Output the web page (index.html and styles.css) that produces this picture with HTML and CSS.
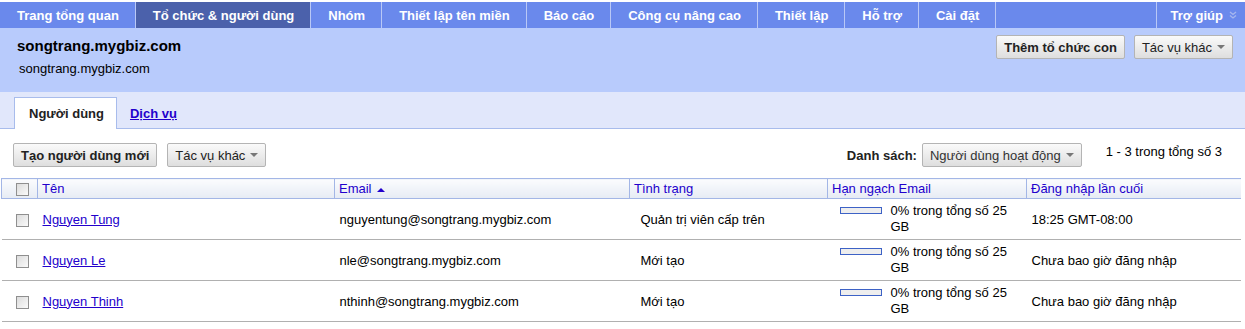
FILE: index.html
```html
<!DOCTYPE html>
<html lang="vi">
<head>
  <meta charset="UTF-8">
  <title>Tổ chức &amp; người dùng</title>
  <link rel="stylesheet" href="styles.css">
</head>
<body>
  <div class="nav">
    <a class="nav-item">Trang tổng quan</a>
    <a class="nav-item active">Tổ chức &amp; người dùng</a>
    <a class="nav-item">Nhóm</a>
    <a class="nav-item">Thiết lập tên miền</a>
    <a class="nav-item">Báo cáo</a>
    <a class="nav-item">Công cụ nâng cao</a>
    <a class="nav-item">Thiết lập</a>
    <a class="nav-item">Hỗ trợ</a>
    <a class="nav-item">Cài đặt</a>
    <span class="nav-fill"></span>
    <a class="nav-item help">Trợ giúp
      <svg class="chev" width="8" height="8" viewBox="0 0 8 8"><path d="M1 1l3 2.5L7 1M1 4.5L4 7l3-2.5" fill="none" stroke="#a7b7ee" stroke-width="1.3"/></svg>
    </a>
  </div>

  <div class="org-head">
    <div class="org-name">
      <h1>songtrang.mygbiz.com</h1>
      <div class="org-sub">songtrang.mygbiz.com</div>
    </div>
    <div class="org-actions">
      <button class="btn bold">Thêm tổ chức con</button>
      <button class="btn">Tác vụ khác <span class="caret"></span></button>
    </div>
  </div>

  <div class="tabs">
    <span class="tab selected">Người dùng</span>
    <a class="tab link" href="#">Dịch vụ</a>
  </div>

  <div class="toolbar">
    <button class="btn bold">Tạo người dùng mới</button>
    <button class="btn">Tác vụ khác <span class="caret"></span></button>
    <span class="spacer"></span>
    <label class="list-label">Danh sách:</label>
    <button class="btn select">Người dùng hoạt động <span class="caret"></span></button>
    <span class="count">1 - 3 trong tổng số 3</span>
  </div>

  <table class="users">
    <thead>
      <tr>
        <th class="c-check"><span class="box"></span></th>
        <th class="c-name">Tên</th>
        <th class="c-email">Email <span class="sort"></span></th>
        <th class="c-status">Tình trạng</th>
        <th class="c-quota">Hạn ngạch Email</th>
        <th class="c-login">Đăng nhập lần cuối</th>
      </tr>
    </thead>
    <tbody>
      <tr>
        <td class="c-check"><span class="box"></span></td>
        <td><a href="#">Nguyen Tung</a></td>
        <td>nguyentung@songtrang.mygbiz.com</td>
        <td>Quản trị viên cấp trên</td>
        <td><div class="quota"><span class="bar"><span class="fill" style="width:0%"></span></span><span>0% trong tổng số 25 GB</span></div></td>
        <td>18:25 GMT-08:00</td>
      </tr>
      <tr>
        <td class="c-check"><span class="box"></span></td>
        <td><a href="#">Nguyen Le</a></td>
        <td>nle@songtrang.mygbiz.com</td>
        <td>Mới tạo</td>
        <td><div class="quota"><span class="bar"><span class="fill" style="width:0%"></span></span><span>0% trong tổng số 25 GB</span></div></td>
        <td>Chưa bao giờ đăng nhập</td>
      </tr>
      <tr>
        <td class="c-check"><span class="box"></span></td>
        <td><a href="#">Nguyen Thinh</a></td>
        <td>nthinh@songtrang.mygbiz.com</td>
        <td>Mới tạo</td>
        <td><div class="quota"><span class="bar"><span class="fill" style="width:0%"></span></span><span>0% trong tổng số 25 GB</span></div></td>
        <td>Chưa bao giờ đăng nhập</td>
      </tr>
    </tbody>
  </table>
</body>
</html>
```

FILE: styles.css
```css
body { margin: 0; padding-top: 2px; font-family: "Liberation Sans", Arial, sans-serif; font-size: 13px; color: #000; background: #fff; }

.nav { display: flex; height: 26px; background: #6a89ec; }
.nav-item { display: flex; align-items: center; padding: 0 16px 0 17px; color: #fff; font-weight: bold; font-size: 13px; border-right: 1px solid #b9c8f6; white-space: nowrap; }
.nav-item.active { background: #4b61ab; }
.nav-fill { flex: 1; border-right: 1px solid #b9c8f6; }
.nav-item.help { border-right: none; padding: 0 8px 0 13px; }
.chev { margin-left: 6px; }

.org-head { display: flex; justify-content: space-between; background: #b8cbfc; height: 64px; padding: 0 12px 0 17px; }
.org-name h1 { margin: 9px 0 0; font-size: 15px; font-weight: bold; line-height: 18px; }
.org-sub { margin-top: 6px; padding-left: 2px; font-size: 13px; }
.org-actions { display: flex; gap: 9px; padding-top: 7px; align-items: flex-start; }
.org-actions .btn { padding: 0 7px; }

.btn { font-family: inherit; font-size: 13px; height: 24px; padding: 0 8px; border: 1px solid #b4b4b4; border-radius: 2px; background: linear-gradient(#fafafa, #dedede); color: #222; display: inline-flex; align-items: center; cursor: pointer; }
.btn.bold { font-weight: bold; }
.caret { display: inline-block; width: 0; height: 0; border-left: 4px solid transparent; border-right: 4px solid transparent; border-top: 4px solid #777; margin-left: 5px; }

.tabs { display: flex; align-items: flex-end; height: 36px; background: #e1e7fb; border-bottom: 1px solid #a8bcec; padding-left: 14px; }
.tab { height: 30px; display: flex; align-items: center; padding: 0 12px 0 13px; font-weight: bold; font-size: 13px; }
.tab.selected { background: #fff; border: 1px solid #a8bcec; border-bottom: none; height: 31px; margin-bottom: -1px; color: #222; padding: 0 12px 0 14px; }
.tab.link { color: #2200cc; text-decoration: underline; }

.toolbar { display: flex; align-items: center; padding: 13px 23px 0 13px; gap: 10px; height: 26px; }
.toolbar .btn { padding: 0 7px; }
.spacer { flex: 1; }
.list-label { font-weight: bold; color: #222; margin-right: -5px; }
.btn.select { padding: 0 7px 0 7px; color: #333; }
.count { margin-left: 14px; align-self: flex-start; padding-top: 2px; }

.users { border-collapse: collapse; margin: 10px 0 0 1px; width: 1240px; table-layout: fixed; }
.users th { height: 19px; text-align: left; font-weight: normal; color: #2200cc; padding: 0 4px; background: linear-gradient(#fbfcfe, #e6ebf4); border-top: 1px solid #a3b6e6; border-bottom: 1px solid #a3b6e6; border-left: 1px solid #a3b6e6; white-space: nowrap; }
.users td { height: 40px; padding: 0 5px; border-bottom: 1px solid #b0b0b0; vertical-align: middle; }
.users td.c-check, .users th.c-check { text-align: left; padding: 0 0 0 14px; }
.c-check { width: 21px; }
.c-name { width: 288px; }
.c-email { width: 286px; }
.c-status { width: 189px; }
.c-quota { width: 190px; }
.users td:nth-child(4) { padding-left: 11px; }
.users a { color: #2200cc; }

.box { display: inline-block; width: 11px; height: 11px; border: 1px solid #8f8f8f; background: linear-gradient(135deg, #dcdcdc, #fafafa); vertical-align: middle; }
.sort { display: inline-block; width: 0; height: 0; border-left: 4px solid transparent; border-right: 4px solid transparent; border-bottom: 4px solid #2200cc; margin-left: 2px; vertical-align: middle; }

.quota { display: flex; align-items: flex-start; padding-left: 7px; line-height: 16px; }
.bar { flex: none; width: 40px; height: 5px; border: 1px solid #3d62c6; background: #eee; margin: 4px 9px 0 0; }
.fill { display: block; height: 100%; background: #3d62c6; }
```
